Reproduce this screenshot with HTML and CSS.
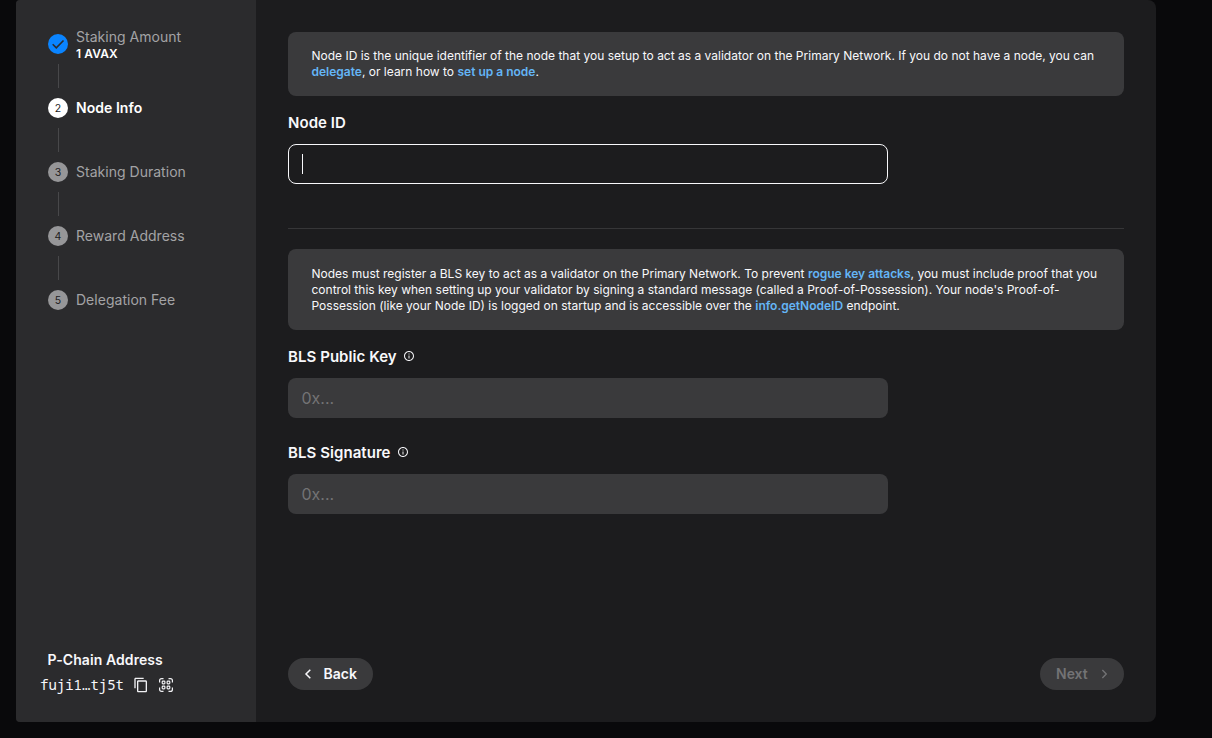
FILE: index.html
```html
<!DOCTYPE html>
<html lang="en">
<head>
<meta charset="utf-8">
<title>Node Info</title>
<link rel="stylesheet" href="styles.css">
</head>
<body>
<div class="dialog">
  <aside class="sidebar">
    <ol class="steps">
      <li class="step">
        <span class="badge done"><svg width="20" height="20" viewBox="0 0 20 20"><path d="M4.700 10.200l3.600 3.600 7.200-7.300" fill="none" stroke="#2b2b2d" stroke-width="1.600"/></svg></span>
        <span class="step-text"><span>Staking Amount</span><strong class="amount">1 AVAX</strong></span>
      </li>
      <li class="step current"><span class="badge">2</span><span class="step-name">Node Info</span></li>
      <li class="step"><span class="badge">3</span><span class="step-name">Staking Duration</span></li>
      <li class="step"><span class="badge">4</span><span class="step-name">Reward Address</span></li>
      <li class="step"><span class="badge">5</span><span class="step-name">Delegation Fee</span></li>
    </ol>
    <div class="address">
      <div class="address-title">P-Chain Address</div>
      <div class="address-row">
        <span class="address-value">fuji1…tj5t</span>
        <svg class="copy" width="16" height="16" viewBox="0 0 24 24" fill="#f1f1f4"><path d="M16 1H4c-1.100 0-2 .9-2 2v14h2V3h12V1zm3 4H8c-1.100 0-2 .9-2 2v14c0 1.100.9 2 2 2h11c1.100 0 2-.9 2-2V7c0-1.100-.9-2-2-2zm0 16H8V7h11v14z"/></svg>
        <svg class="qr" width="16" height="16" viewBox="0 0 16 16" fill="none" stroke="#f1f1f4" stroke-width="1.200"><path d="M1.600 5.500V3.600q0-2 2-2H5.500M10.500 1.600h1.900q2 0 2 2V5.500M14.400 10.500v1.900q0 2-2 2H10.500M5.500 14.400H3.600q-2 0-2-2V10.500"/><rect x="4.200" y="4.200" width="2.700" height="2.700" rx=".8"/><rect x="9.100" y="4.200" width="2.700" height="2.700" rx=".8"/><rect x="4.200" y="9.100" width="2.700" height="2.700" rx=".8"/><rect x="9.100" y="9.100" width="2.700" height="2.700" rx=".8"/></svg>
      </div>
    </div>
  </aside>
  <main class="content">
    <p class="callout first">Node ID is the unique identifier of the node that you setup to act as a validator on the Primary Network. If you do not have a node, you can<br><a>delegate</a>, or learn how to <a>set up a node</a>.</p>
    <label class="label">Node ID</label>
    <div class="field focused"><span class="caret"></span></div>
    <hr class="divider">
    <p class="callout second">Nodes must register a BLS key to act as a validator on the Primary Network. To prevent <a>rogue key attacks</a>, you must include proof that you<br>control this key when setting up your validator by signing a standard message (called a Proof-of-Possession). Your node's Proof-of-<br>Possession (like your Node ID) is logged on startup and is accessible over the <a>info.getNodeID</a> endpoint.</p>
    <label class="label">BLS Public Key <svg class="info" width="12" height="12" viewBox="0 0 24 24" fill="#f1f1f4"><path d="M11 7h2v2h-2zm0 4h2v6h-2zm1-9C6.480 2 2 6.480 2 12s4.480 10 10 10 10-4.480 10-10S17.520 2 12 2zm0 18c-4.410 0-8-3.590-8-8s3.590-8 8-8 8 3.590 8 8-3.590 8-8 8z"/></svg></label>
    <div class="field">0x...</div>
    <label class="label signature">BLS Signature <svg class="info" width="12" height="12" viewBox="0 0 24 24" fill="#f1f1f4"><path d="M11 7h2v2h-2zm0 4h2v6h-2zm1-9C6.480 2 2 6.480 2 12s4.480 10 10 10 10-4.480 10-10S17.520 2 12 2zm0 18c-4.410 0-8-3.590-8-8s3.590-8 8-8 8 3.590 8 8-3.590 8-8 8z"/></svg></label>
    <div class="field">0x...</div>
    <footer class="actions">
      <button class="button back"><svg width="8" height="12" viewBox="0 0 8 12"><path d="M6.300 1.700L2 6l4.300 4.300"/></svg><span>Back</span></button>
      <button class="button next" disabled><span>Next</span><svg width="8" height="12" viewBox="0 0 8 12"><path d="M1.500 1.700L5.800 6l-4.300 4.300"/></svg></button>
    </footer>
  </main>
</div>
</body>
</html>
```
FILE: styles.css
```css
* { box-sizing: border-box; }
body {
  margin: 0;
  height: 738px;
  overflow: hidden;
  background: #09090b;
  color: #f8f8fb;
  font-family: Inter, "Liberation Sans", sans-serif;
}
.dialog {
  display: flex;
  width: 1140px;
  height: 722px;
  margin-left: 16px;
  border-radius: 4px 8px 8px 4px;
  overflow: hidden;
  background: #1c1c1e;
}
.sidebar {
  display: flex;
  flex-direction: column;
  justify-content: space-between;
  width: 240px;
  padding: 24px 24px 25px;
  background: #2b2b2d;
}
.steps {
  display: flex;
  flex-direction: column;
  gap: 24px;
  margin: 0;
  padding: 0 8px;
  list-style: none;
}
.step {
  position: relative;
  display: flex;
  align-items: center;
  gap: 8px;
  height: 40px;
  color: #a3a3a5;
  font-size: 14px;
  letter-spacing: 0.02px;
  white-space: nowrap;
}
.step-name { padding-bottom: 2px; }
.step:not(:last-child)::after {
  content: "";
  position: absolute;
  left: 10px;
  top: 40px;
  width: 1px;
  height: 24px;
  background: #48484a;
}
.badge {
  display: grid;
  place-items: center;
  width: 20px;
  height: 20px;
  border-radius: 50%;
  background: #969698;
  color: #1c1c1e;
  font-size: 10.500px;
  letter-spacing: 0;
}
.badge.done { background: #0a84ff; }
.current { color: #fff; font-weight: 600; letter-spacing: 0.05px; }
.current .badge { background: #fff; font-weight: 400; }
.step-text {
  display: flex;
  flex-direction: column;
  padding-top: 2px;
  line-height: 17px;
}
.amount {
  color: #fff;
  font-size: 12px;
  font-weight: 600;
  letter-spacing: 0.1px;
}
.address-title {
  padding-left: 7.500px;
  font-size: 14px;
  font-weight: 600;
  line-height: 20px;
  letter-spacing: 0.08px;
}
.address-row {
  display: flex;
  align-items: center;
  height: 24px;
  margin-top: 3px;
}
.address-value {
  width: 84px;
  padding-bottom: 1px;
  font-family: "Noto Sans Mono", "DejaVu Sans Mono", monospace;
  font-size: 14px;
}
.copy { margin-left: 9px; }
.qr { margin-left: 9px; }
.content {
  display: flex;
  flex-direction: column;
  flex: 1;
  padding: 32px;
}
.callout {
  margin: 0;
  padding: 16px 23.500px;
  border-radius: 8px;
  background: #3a3a3c;
  font-size: 12px;
  line-height: 16px;
  white-space: nowrap;
}
.callout a { color: #64b5f6; font-weight: 600; }
.first { height: 64px; }
.second { height: 81px; padding-top: 17px; }
.label {
  display: flex;
  align-items: center;
  gap: 6px;
  height: 20px;
  margin: 16px 0 12px;
  font-size: 15px;
  font-weight: 600;
  letter-spacing: 0.06px;
}
.signature { margin-top: 24px; }
.field {
  display: flex;
  align-items: center;
  width: 600px;
  height: 40px;
  padding: 0 13.500px;
  border-radius: 8px;
  background: #3a3a3c;
  color: #737375;
  font-size: 16px;
}
.focused { padding: 0 13px; border: 1px solid #f8f8fb; background: transparent; }
.caret { width: 1px; height: 20px; background: #f8f8fb; }
.divider {
  width: 100%;
  height: 1px;
  margin: 44px 0 20px;
  border: 0;
  background: #363638;
}
.actions {
  display: flex;
  justify-content: space-between;
  margin-top: auto;
}
.button {
  display: flex;
  align-items: center;
  height: 32px;
  padding: 0 16px;
  border: 0;
  border-radius: 16px;
  background: #3a3a3c;
  color: #f8f8fb;
  font: 600 14px Inter, "Liberation Sans", sans-serif;
}
.button span { padding-bottom: 2px; }
.button path { fill: none; stroke: currentColor; stroke-width: 1.500; }
.back { width: 85px; gap: 11.500px; }
.next { width: 84px; gap: 13px; color: #737375; }
```
